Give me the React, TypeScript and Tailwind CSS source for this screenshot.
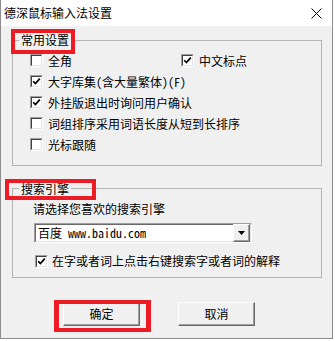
import React from 'react';

const cjk = "font-['Noto_Sans_CJK_SC','Noto_Sans',sans-serif]";
const mono = "font-['Noto_Sans_Mono_CJK_SC','Liberation_Mono',monospace]";

const CheckBox = ({ checked = false }: { checked?: boolean }) => (
  <span className="flex h-[13px] w-[13px] shrink-0 border border-b-white border-l-[#a0a0a0] border-r-white border-t-[#a0a0a0] bg-white">
    <span className="flex h-full w-full items-center justify-center border border-b-[#e3e3e3] border-l-[#404040] border-r-[#e3e3e3] border-t-[#404040] bg-white">
      {checked && (
        <svg width="9" height="9" viewBox="0 0 9 9">
          <path d="M1.2 4.2 L3.4 6.6 L7.8 1.6" fill="none" stroke="#000" strokeWidth="1.7" />
        </svg>
      )}
    </span>
  </span>
);

const Row = ({ checked, children }: { checked?: boolean; children: React.ReactNode }) => (
  <div className="flex h-[21px] items-center gap-[5px]">
    <CheckBox checked={checked} />
    <span className="leading-[16px]">{children}</span>
  </div>
);

const Half = ({ children }: { children: React.ReactNode }) => (
  <span className={`${mono} text-[12px]`}>{children}</span>
);

const WinButton = ({ label, marked }: { label: string; marked?: boolean }) => (
  <div className="relative">
    <button className="flex h-[24px] w-[77px] items-center justify-center border border-b-[#696969] border-l-white border-r-[#696969] border-t-white bg-[#f0f0f0] text-[12px] leading-[16px] text-black shadow-[inset_-1px_-1px_0_#a0a0a0]">
      {label}
    </button>
    {marked && (
      <div className="pointer-events-none absolute -left-[9px] -top-[2px] h-[32px] w-[97px] border-[5px] border-y-4 border-[#ed1c24]" />
    )}
  </div>
);

export default function App() {
  return (
    <div className={`${cjk} h-[341px] w-[335px] bg-white text-[12px] text-black`}>
      <div className="flex h-[339px] w-[333px] flex-col border-x border-b border-[#8c8c8c] bg-[#f0f0f0]">
        {/* Title bar */}
        <div className="flex h-[26px] shrink-0 items-center justify-between bg-white pl-[3px] pr-[10px]">
          <span className="text-[12px] leading-[16px]">德深鼠标输入法设置</span>
          <svg width="11" height="11" viewBox="0 0 11 11">
            <path d="M0.5 0.5 L10.5 10.5 M10.5 0.5 L0.5 10.5" stroke="#000" strokeWidth="1" />
          </svg>
        </div>

        <div className="flex flex-col pl-[11px] pr-[10px]">
          {/* 常用设置 */}
          <div className="relative mt-[14px] border border-[#b4b4b4] pb-[10px] pl-[17px] pt-[9px]">
            <span className="absolute -top-[9px] left-[6px] bg-[#f0f0f0] px-[2px] leading-[16px]">
              常用设置
              <span className="pointer-events-none absolute -left-[8px] -top-[3px] h-[25px] w-[64px] border-4 border-[#ed1c24]" />
            </span>
            <div className="flex">
              <div className="w-[151px]">
                <Row>全角</Row>
              </div>
              <Row checked>中文标点</Row>
            </div>
            <Row checked>
              大字库集<Half>(</Half>含大量繁体<Half>)(F)</Half>
            </Row>
            <Row checked>外挂版退出时询问用户确认</Row>
            <Row>词组排序采用词语长度从短到长排序</Row>
            <Row>光标跟随</Row>
          </div>

          {/* 搜索引擎 */}
          <div className="relative mt-[22px] border border-[#b4b4b4] pb-[8px] pl-[20px] pt-[12px]">
            <span className="absolute -top-[8px] left-[6px] bg-[#f0f0f0] px-[2px] leading-[16px]">
              搜索引擎
              <span className="pointer-events-none absolute -left-[14px] -top-[2px] h-[21px] w-[91px] border-4 border-[#ed1c24]" />
            </span>
            <div className="leading-[16px]">请选择您喜欢的搜索引擎</div>
            <div className="ml-[1px] mt-[6px] flex h-[20px] w-[218px] border border-b-white border-l-[#a0a0a0] border-r-white border-t-[#a0a0a0] bg-white">
              <div className="flex flex-1 items-center justify-between border border-b-[#e3e3e3] border-l-[#696969] border-r-[#e3e3e3] border-t-[#696969] pl-[2px]">
                <span className="leading-[16px]">
                  百度<Half> www.baidu.com</Half>
                </span>
                <div className="flex h-[18px] w-[17px] items-center justify-center border border-b-[#696969] border-l-white border-r-[#696969] border-t-white bg-[#f0f0f0] shadow-[inset_-1px_-1px_0_#a0a0a0]">
                  <svg width="7" height="4" viewBox="0 0 7 4">
                    <path d="M0 0 H7 L3.5 4 Z" fill="#000" />
                  </svg>
                </div>
              </div>
            </div>
            <div className="ml-[2px] mt-[10px] flex h-[16px] items-center gap-[4px]">
              <CheckBox checked />
              <span className="leading-[16px]">在字或者词上点击右键搜索字或者词的解释</span>
            </div>
          </div>

          {/* Buttons */}
          <div className="ml-[51px] mt-[24px] flex gap-[38px]">
            <WinButton label="确定" marked />
            <WinButton label="取消" />
          </div>
        </div>
      </div>
    </div>
  );
}
